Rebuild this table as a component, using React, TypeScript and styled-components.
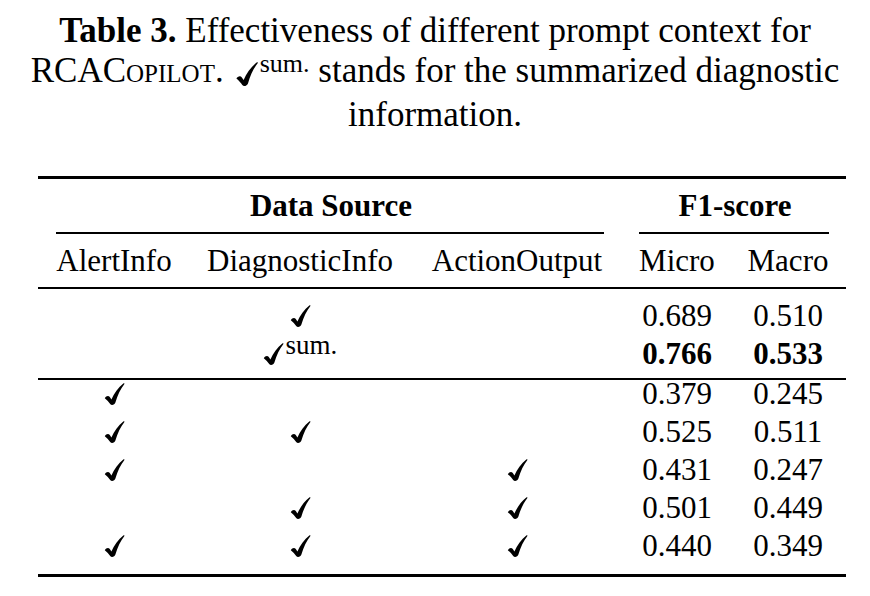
import React from "react";
import styled, { createGlobalStyle } from "styled-components";

const GlobalStyle = createGlobalStyle`
  html, body {
    margin: 0;
    padding: 0;
    background: #ffffff;
  }
  body {
    font-family: "Liberation Serif", "Times New Roman", serif;
    color: #000;
  }
`;

const Page = styled.div`
  width: 870px;
  height: 596px;
  overflow: hidden;
  background: #fff;
`;

const Caption = styled.div`
  text-align: center;
  font-size: 35px;
  line-height: 40px;
  padding-top: 11px;
  white-space: nowrap;
`;

const CaptionLabel = styled.b`
  font-weight: 700;
`;

const SmallCaps = styled.span`
  font-variant: small-caps;
`;

const Sup = styled.span<{ $size: number; $raise: number }>`
  font-size: ${(p) => p.$size}px;
  line-height: 1;
  position: relative;
  top: ${(p) => -p.$raise}px;
  margin-left: 2px;
`;

const Table = styled.div`
  margin: 41px 0 0 38px;
  width: 808px;
  font-size: 31px;
`;

const Rule = styled.div<{ $thick: number }>`
  height: ${(p) => p.$thick}px;
  background: #000;
`;

const Grid = styled.div`
  display: grid;
  grid-template-columns: 152px 220px 214px 106px 116px;
`;

const GroupHeader = styled(Grid)`
  height: 53px;
  align-items: center;
  font-weight: 700;
`;

const SpanCell = styled.div<{ $span: number }>`
  grid-column: span ${(p) => p.$span};
  text-align: center;
`;

const CmidRow = styled(Grid)`
  height: 2px;
`;

const CmidSeg = styled.div<{ $span: number; $l: number; $r: number }>`
  grid-column: span ${(p) => p.$span};
  margin: 0 ${(p) => p.$r}px 0 ${(p) => p.$l}px;
  background: #000;
`;

const HeaderRow = styled(Grid)`
  height: 53px;
  align-items: center;
`;

const Cell = styled.div<{ $bold?: boolean }>`
  display: flex;
  justify-content: center;
  align-items: center;
  height: 28px;
  line-height: 28px;
  font-weight: ${(p) => (p.$bold ? 700 : 400)};
  white-space: nowrap;
`;

const Body = styled.div<{ $top: number; $bottom: number }>`
  padding: ${(p) => p.$top}px 0 ${(p) => p.$bottom}px;
`;

const BodyRow = styled(Grid)`
  height: 38px;
  align-items: start;
`;

const CheckSvg = styled.svg<{ $w: number; $h: number }>`
  width: ${(p) => p.$w}px;
  height: ${(p) => p.$h}px;
  flex: none;
`;

const InlineCheck = styled.span`
  display: inline-block;
  vertical-align: -4px;
  margin-left: 12px;
`;

function Check({ w = 21, h = 22 }: { w?: number; h?: number }) {
  return (
    <CheckSvg $w={w} $h={h} viewBox="0 0 20 22">
      <path
        d="M0.3,15.2 C1.5,13.1 3.9,12.2 5.3,14.1 L6.9,16.5 C9.6,10.5 13.6,4.5 19.1,0.3 C19.6,-0.1 20.3,0.5 19.9,1 C16,6 13.1,12 10.9,19.6 C10.2,21.8 7,22.8 5.7,21.1 C4.3,19.1 2.5,17 0.3,15.2 Z"
        fill="#000"
      />
    </CheckSvg>
  );
}

type Row = {
  a: boolean;
  d: "" | "y" | "sum";
  o: boolean;
  micro: string;
  macro: string;
  bold?: boolean;
};

const group1: Row[] = [
  { a: false, d: "y", o: false, micro: "0.689", macro: "0.510" },
  { a: false, d: "sum", o: false, micro: "0.766", macro: "0.533", bold: true },
];

const group2: Row[] = [
  { a: true, d: "", o: false, micro: "0.379", macro: "0.245" },
  { a: true, d: "y", o: false, micro: "0.525", macro: "0.511" },
  { a: true, d: "", o: true, micro: "0.431", macro: "0.247" },
  { a: false, d: "y", o: true, micro: "0.501", macro: "0.449" },
  { a: true, d: "y", o: true, micro: "0.440", macro: "0.349" },
];

function DataRow({ r }: { r: Row }) {
  return (
    <BodyRow>
      <Cell>{r.a && <Check />}</Cell>
      <Cell>
        {r.d === "y" && <Check />}
        {r.d === "sum" && (
          <>
            <Check />
            <Sup $size={27} $raise={9}>
              sum.
            </Sup>
          </>
        )}
      </Cell>
      <Cell>{r.o && <Check />}</Cell>
      <Cell $bold={r.bold}>{r.micro}</Cell>
      <Cell $bold={r.bold}>{r.macro}</Cell>
    </BodyRow>
  );
}

export default function App() {
  return (
    <Page>
      <GlobalStyle />
      <Caption>
        <CaptionLabel>Table 3.</CaptionLabel> Effectiveness of different prompt context for
        <br />
        <SmallCaps>RCACopilot</SmallCaps>.
        <InlineCheck>
          <Check w={22} h={24} />
        </InlineCheck>
        <Sup $size={26} $raise={10}>
          sum.
        </Sup>{" "}
        stands for the summarized diagnostic
        <br />
        information.
      </Caption>
      <Table>
        <Rule $thick={3} />
        <GroupHeader>
          <SpanCell $span={3}>Data Source</SpanCell>
          <SpanCell $span={2}>F1-score</SpanCell>
        </GroupHeader>
        <CmidRow>
          <CmidSeg $span={3} $l={18} $r={20} />
          <CmidSeg $span={2} $l={15} $r={17} />
        </CmidRow>
        <HeaderRow>
          <SpanCell $span={1}>AlertInfo</SpanCell>
          <SpanCell $span={1}>DiagnosticInfo</SpanCell>
          <SpanCell $span={1}>ActionOutput</SpanCell>
          <SpanCell $span={1}>Micro</SpanCell>
          <SpanCell $span={1}>Macro</SpanCell>
        </HeaderRow>
        <Rule $thick={2} />
        <Body $top={13} $bottom={0}>
          {group1.map((r, i) => (
            <DataRow key={i} r={r} />
          ))}
        </Body>
        <Rule $thick={2} />
        <Body $top={0} $bottom={4}>
          {group2.map((r, i) => (
            <DataRow key={i} r={r} />
          ))}
        </Body>
        <Rule $thick={3} />
      </Table>
    </Page>
  );
}
